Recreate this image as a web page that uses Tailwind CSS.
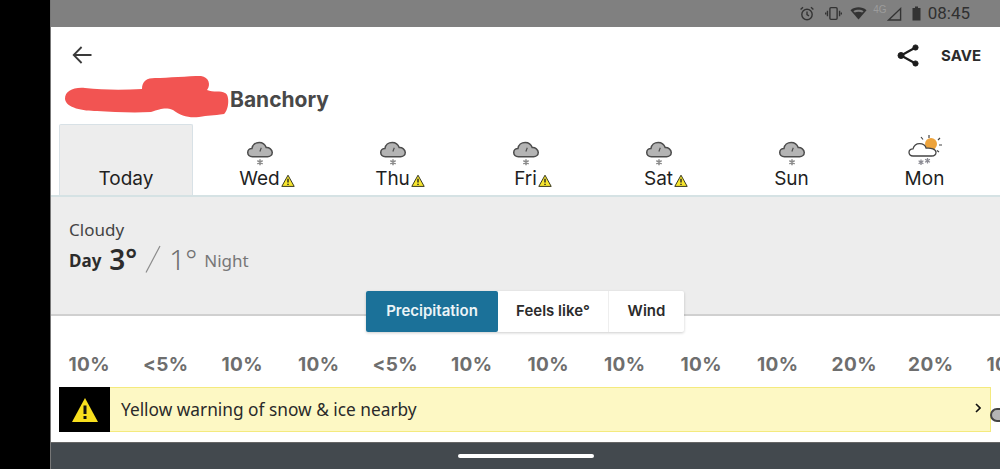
<!DOCTYPE html>
<html lang="en">
<head>
<meta charset="utf-8">
<script src="https://cdn.jsdelivr.net/npm/@tailwindcss/browser@4"></script>
<title>Banchory</title>
</head>
<body class="m-0 overflow-hidden bg-black">
<svg width="0" height="0" class="absolute">
  <defs>
    <g id="tri">
      <path d="M7 1.2 L13.2 12.4 H0.8 Z" fill="#f6e52e" stroke="#3a3a20" stroke-width="1" stroke-linejoin="round"/>
      <path d="M7 4.8 V8.6 M7 9.8 V11" stroke="#222" stroke-width="1.4"/>
    </g>
    <g id="cloud">
      <path d="M5 16 C2.400 16 1 14.400 1 12.400 C1 10.400 2.600 9 4.600 9 C5 6 7.600 3.800 10.800 3.800 C13.800 3.800 16 5.800 16.800 8.200 C19.400 8 22 9.800 22 12.400 C22 14.600 20.200 16 18 16 Z" fill="#b4b4b4" stroke="#4c4c4c" stroke-width="1.300"/>
      <path d="M12.600 8.400 L11.400 11.600" stroke="#4c4c4c" stroke-width="1"/>
      <path d="M11.500 18.200 V23.400 M9.200 19.400 L13.800 22.200 M13.800 19.400 L9.200 22.200" stroke="#8b8b8b" stroke-width="1.300"/>
    </g>
  </defs>
</svg>
<div class="flex h-[469px] w-[1000px] overflow-hidden bg-black font-['Noto_Sans',sans-serif]">
  <div class="w-[50px] shrink-0 bg-black"></div>
  <div class="relative flex w-[950px] flex-col overflow-hidden border-l border-l-[#777] bg-white">

    <div class="flex h-[27px] shrink-0 items-center justify-end gap-[7px] bg-[#808080] pr-[30px] text-[#2f2f2f]">
      <svg width="16" height="17" viewBox="0 0 16 16" fill="none" stroke="#333" stroke-width="1.4"><circle cx="8" cy="9" r="5.200"/><path d="M8 6v3.200l2 1.200M1.600 4 4 1.800M14.400 4 12 1.800"/></svg>
      <svg width="17" height="15" viewBox="0 0 16 14" fill="none" stroke="#333" stroke-width="1.300" class="ml-[3px]"><rect x="4.600" y="1.500" width="6.800" height="11" rx="1"/><path d="M2.300 4.500v5M0.600 6v2M13.700 4.500v5M15.400 6v2"/></svg>
      <svg width="17" height="13" viewBox="0 0 17 13" class="ml-[1px]"><path d="M0.500 3.200 C5 -0.600 12 -0.600 16.500 3.200 L8.500 12.600 Z" fill="#333"/><path d="M3.400 4.200 C6.400 2.400 10.600 2.400 13.600 4.200 L12.200 5.600 C9.800 4.600 7.200 4.600 4.800 5.600 Z" fill="#808080"/></svg>
      <div class="-mx-[1px] -mt-[8px] font-['Liberation_Sans',sans-serif] text-[10px] leading-none text-[#9c9c9c]">4G</div>
      <svg width="15" height="14" viewBox="0 0 15 14" fill="none" stroke="#333" stroke-width="1.400" class="-ml-[6px]"><path d="M1.600 13 L13.600 1.600 V13 Z"/></svg>
      <svg width="9" height="15" viewBox="0 0 9 15" class="ml-[3px]"><path d="M3 .5h3v1.500h2.500v12.500H.5V2H3z" fill="#333"/></svg>
      <span class="font-['Roboto',sans-serif] text-[17px] leading-none text-[#303030]">08:45</span>
    </div>

    <div class="flex h-[55px] shrink-0 items-center justify-between pl-[21px] pr-[19px] pt-[1px]">
      <svg width="20" height="18" viewBox="0 0 20 18" fill="none" stroke="#3a3a3a" stroke-width="1.800"><path d="M19.500 9H2M9.600 1 1.700 9l7.900 8"/></svg>
      <div class="flex items-center gap-[21px]">
        <svg width="23" height="25" viewBox="0 0 23 25" fill="#1d1d1d" stroke="#1d1d1d"><circle cx="18.500" cy="4.500" r="2.600"/><circle cx="18.500" cy="20.500" r="2.600"/><circle cx="4" cy="12.500" r="3"/><path d="M18.500 4.500 4 12.500l14.500 8" fill="none" stroke-width="2.200"/></svg>
        <span class="font-['Inter',sans-serif] text-[15px] font-bold leading-none text-[#2b2b2b]">SAVE</span>
      </div>
    </div>

    <div class="relative flex h-[42px] shrink-0 items-start pl-[179px] pt-[6px]">
      <svg class="absolute left-[12px] top-[-7px]" width="168" height="44" viewBox="0 0 168 44"><path d="M2 24C2 16 10 12 22 13C40 15 60 15 79 14C79 6 84 3 92 3C105 3 125 1 138 1C146 2 148 10 144 15C150 18 158 15 162 18C167 20 166 35 161 39C150 41 145 40 136 42C125 43 118 41 110 35C102 32 98 34 88 37C70 38 50 37 34 36C20 36 3 33 2 24Z" fill="#f25452"/></svg>
      <span class="relative font-['Inter',sans-serif] text-[21px] font-bold leading-[24px] text-[#484848]">Banchory</span>
    </div>

    <div class="flex h-[73px] shrink-0 border-b-2 border-b-[#d5e2e4] pl-[8px] font-['Inter',sans-serif] text-[19px] text-[#1f1f1f]">
      <div class="flex w-[134px] shrink-0 flex-col items-center justify-end rounded-t-[2px] border border-b-0 border-[#d8e1e6] bg-[#ededed] pb-[4px]">
        <span class="leading-[24px]">Today</span>
      </div>
      <div class="flex w-[133px] flex-col items-center justify-end pb-[5px]">
        <svg width="28" height="28" viewBox="0 0 23 24" class="mb-[2px]"><use href="#cloud"/></svg>
        <span class="relative leading-[22px]">Wed<svg width="14" height="14" viewBox="0 0 14 14" class="absolute -right-[15px] top-[6px]"><use href="#tri"/></svg></span>
      </div>
      <div class="flex w-[133px] flex-col items-center justify-end pb-[5px]">
        <svg width="28" height="28" viewBox="0 0 23 24" class="mb-[2px]"><use href="#cloud"/></svg>
        <span class="relative leading-[22px]">Thu<svg width="14" height="14" viewBox="0 0 14 14" class="absolute -right-[15px] top-[6px]"><use href="#tri"/></svg></span>
      </div>
      <div class="flex w-[133px] flex-col items-center justify-end pb-[5px]">
        <svg width="28" height="28" viewBox="0 0 23 24" class="mb-[2px]"><use href="#cloud"/></svg>
        <span class="relative leading-[22px]">Fri<svg width="14" height="14" viewBox="0 0 14 14" class="absolute -right-[15px] top-[6px]"><use href="#tri"/></svg></span>
      </div>
      <div class="flex w-[133px] flex-col items-center justify-end pb-[5px]">
        <svg width="28" height="28" viewBox="0 0 23 24" class="mb-[2px]"><use href="#cloud"/></svg>
        <span class="relative leading-[22px]">Sat<svg width="14" height="14" viewBox="0 0 14 14" class="absolute -right-[15px] top-[6px]"><use href="#tri"/></svg></span>
      </div>
      <div class="flex w-[133px] flex-col items-center justify-end pb-[5px]">
        <svg width="28" height="28" viewBox="0 0 23 24" class="mb-[2px]"><use href="#cloud"/></svg>
        <span class="leading-[22px]">Sun</span>
      </div>
      <div class="flex w-[133px] flex-col items-center justify-end pb-[5px]">
        <svg width="36" height="33" viewBox="0 0 36 33" class="ml-[2px]">
          <path d="M21 0V3M32 3l-2 2M34 10h-3M31 17l-2-1.500M13 2l2 2.500" stroke="#444" stroke-width="1.200"/>
          <circle cx="23" cy="9" r="6" fill="#eda33b"/>
          <path d="M5 21C2.500 21 1 19.400 1 17.300C1 15.200 2.800 13.700 5 13.800C5.800 10.800 8.400 8.600 11.600 8.600C14.800 8.600 17.400 10.600 18.200 13.200C23 12.500 28 14.500 28 17.200C28 19.500 26 21 23.500 21Z" fill="#fff" stroke="#444" stroke-width="1.300"/>
          <path d="M13 24.500V30M10.600 25.800 15.400 28.700M15.400 25.800 10.600 28.700M19.500 23V28.500M17.100 24.300 21.900 27.200M21.900 24.300 17.100 27.200" stroke="#8b8b93" stroke-width="1.300"/>
        </svg>
        <span class="leading-[22px]">Mon</span>
      </div>
    </div>

    <div class="h-[119px] shrink-0 border-b-2 border-b-[#d0d0d0] bg-[#ededed] pl-[18px] pt-[23px]">
      <div class="text-[17px] leading-[20px] text-[#444]">Cloudy</div>
      <div class="mt-[3px] flex h-[32px] items-center">
        <span class="mt-[3px] text-[17px] font-bold text-[#2c2c2c]">Day</span>
        <span class="ml-[8px] text-[28px] font-semibold leading-none text-[#2c2c2c]">3°</span>
        <svg width="16" height="28" viewBox="0 0 16 28" class="ml-[8px]"><path d="M15 1 1 27.500" stroke="#8b8b8b" stroke-width="1.200"/></svg>
        <span class="ml-[8px] text-[28px] font-light leading-none text-[#6f6f6f]">1°</span>
        <span class="ml-[7px] mt-[3px] text-[17px] text-[#777]">Night</span>
      </div>
    </div>

    <div class="relative z-10 -mt-[25px] flex h-[41px] shrink-0 justify-center pr-[1px] font-['Inter',sans-serif]">
      <div class="flex rounded-[2px] bg-white text-[15px] font-semibold shadow-[0_1px_3px_rgba(0,0,0,0.2)]">
        <div class="flex w-[132px] items-center justify-center rounded-[2px] bg-[#1b7199] text-[#ecf4f7]">Precipitation</div>
        <div class="flex w-[111px] items-center justify-center border-r border-r-[#eee] text-[#2b2b2b]">Feels like°</div>
        <div class="flex w-[75px] items-center justify-center text-[#2b2b2b]">Wind</div>
      </div>
    </div>

    <div class="mt-[20px] flex h-[24px] shrink-0 items-center font-['Inter',sans-serif] text-[19px] font-bold leading-none tracking-[0.4px] text-[#6e6e6e]">
      <span class="w-[76.500px] shrink-0 text-center">10%</span>
      <span class="w-[76.500px] shrink-0 text-center">&lt;5%</span>
      <span class="w-[76.500px] shrink-0 text-center">10%</span>
      <span class="w-[76.500px] shrink-0 text-center">10%</span>
      <span class="w-[76.500px] shrink-0 text-center">&lt;5%</span>
      <span class="w-[76.500px] shrink-0 text-center">10%</span>
      <span class="w-[76.500px] shrink-0 text-center">10%</span>
      <span class="w-[76.500px] shrink-0 text-center">10%</span>
      <span class="w-[76.500px] shrink-0 text-center">10%</span>
      <span class="w-[76.500px] shrink-0 text-center">10%</span>
      <span class="w-[76.500px] shrink-0 text-center">20%</span>
      <span class="w-[76.500px] shrink-0 text-center">20%</span>
      <span class="w-[76.500px] shrink-0 text-center">10%</span>
    </div>

    <div class="relative mt-[11px] ml-[8px] flex h-[45px] w-[932px] shrink-0 border border-[#f4ea7e] bg-[#fdf8c4]">
      <div class="-my-px -ml-px flex w-[51px] shrink-0 items-center justify-center bg-black">
        <svg width="28" height="26" viewBox="0 0 28 26"><path d="M14 1 27 25H1Z" fill="#f7df1e"/><path d="M14 8.500V17M14 19V22" stroke="#111" stroke-width="3"/></svg>
      </div>
      <div class="flex flex-1 items-center justify-between pl-[11px] pr-[9px]">
        <span class="text-[17.300px] leading-none text-[#2a2a2a]">Yellow warning of snow &amp; ice nearby</span>
        <svg width="6" height="10" viewBox="0 0 6 10" fill="none" stroke="#111" stroke-width="1.600" class="-mt-[4px]"><path d="M1 1l4 4-4 4"/></svg>
      </div>
      <div class="absolute -right-[10px] top-[20px] h-[14px] w-[10px] rounded-l-full border-2 border-r-0 border-[#444] bg-[#b4b4b4]"></div>
    </div>

    <div class="mt-[10px] flex h-[27px] shrink-0 items-center justify-center border-t border-t-[#666] bg-[#43494e]">
      <div class="h-[4px] w-[136px] rounded-full bg-white"></div>
    </div>
  </div>
</div>
</body>
</html>
